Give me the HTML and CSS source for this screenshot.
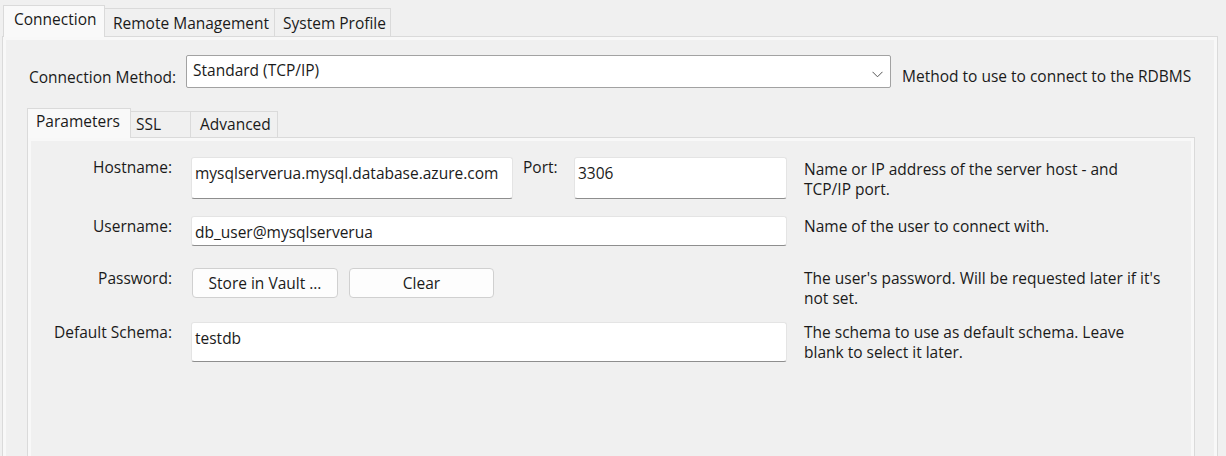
FILE: index.html
```html
<!DOCTYPE html>
<html>
<head>
<meta charset="utf-8">
<link rel="stylesheet" href="styles.css">
</head>
<body>
<div class="window">
  <div class="tabbar outer-tabs">
    <div class="tab active t-conn">Connection</div>
    <div class="tab t-remote">Remote Management</div>
    <div class="tab t-sys">System Profile</div>
  </div>
  <div class="panel outer-panel">
    <div class="method-row">
      <div class="method-label">Connection Method:</div>
      <div class="select">
        <span class="select-text">Standard (TCP/IP)</span>
        <svg class="chevron" width="11" height="7" viewBox="0 0 11 7"><polyline points="0.5,0.8 5.5,5.8 10.5,0.8" fill="none" stroke="#555" stroke-width="1"/></svg>
      </div>
      <div class="hint method-hint">Method to use to connect to the RDBMS</div>
    </div>
    <div class="tabbar inner-tabs">
      <div class="tab active t-params">Parameters</div>
      <div class="tab t-ssl">SSL</div>
      <div class="tab t-adv">Advanced</div>
    </div>
    <div class="panel inner-panel">
      <div class="form-row row-host">
        <div class="label">Hostname:</div>
        <div class="field host-field">
          <div class="input host-input">mysqlserverua.mysql.database.azure.com</div>
          <div class="port-label">Port:</div>
          <div class="input port-input">3306</div>
        </div>
        <div class="hint">Name or IP address of the server host - and<br>TCP/IP port.</div>
      </div>
      <div class="form-row row-user">
        <div class="label">Username:</div>
        <div class="field">
          <div class="input user-input">db_user@mysqlserverua</div>
        </div>
        <div class="hint">Name of the user to connect with.</div>
      </div>
      <div class="form-row row-pass">
        <div class="label">Password:</div>
        <div class="field buttons">
          <div class="button btn-vault">Store in Vault ...</div>
          <div class="button btn-clear">Clear</div>
        </div>
        <div class="hint">The user's password. Will be requested later if it's<br>not set.</div>
      </div>
      <div class="form-row row-schema">
        <div class="label">Default Schema:</div>
        <div class="field">
          <div class="input schema-input">testdb</div>
        </div>
        <div class="hint">The schema to use as default schema. Leave<br>blank to select it later.</div>
      </div>
    </div>
  </div>
</div>
</body>
</html>
```

FILE: styles.css
```css
html, body {
  margin: 0;
  padding: 0;
  height: 456px;
  overflow: hidden;
  background: #f0f0f0;
}
body {
  font-family: "Open Sans", "Noto Sans", sans-serif;
  font-size: 15.5px;
  line-height: 20px;
  color: #1a1a1a;
}
.window {
  height: 456px;
  display: flex;
  flex-direction: column;
}
.tabbar {
  display: flex;
  align-items: flex-end;
}
.outer-tabs {
  height: 36px;
  padding-left: 3px;
}
.tab {
  box-sizing: border-box;
  height: 28px;
  border: 1px solid #dadada;
  border-bottom: none;
  background: #f0f0f0;
  padding: 4px 8px 0 8px;
  white-space: nowrap;
  margin-left: -1px;
}
.tab:first-child { margin-left: 0; }
.tab.active {
  background: #f9f9f9;
  padding-top: 3px;
  position: relative;
  z-index: 2;
  margin-bottom: -1px;
  height: 32px;
}
.t-conn { width: 102px; padding-left: 10px; }
.t-remote { width: 171px; padding-left: 8px; }
.t-sys { width: 117px; padding-left: 8px; }

.panel {
  box-sizing: border-box;
  border: 1px solid #dadada;
  border-bottom: none;
  background: #f0f0f0;
  box-shadow: inset 3px 0 0 #f8f8f8, inset -3px 0 0 #f8f8f8, inset 0 3px 0 #f8f8f8;
}
.outer-panel {
  flex: 1;
  margin: 0 8px 0 2px;
  padding: 18px 22px 0 24px;
  display: flex;
  flex-direction: column;
  min-height: 0;
}
.method-row {
  display: flex;
  align-items: flex-start;
  height: 33px;
}
.method-label {
  width: 159px;
  padding-left: 2px;
  box-sizing: border-box;
  padding-top: 12px;
  white-space: nowrap;
}
.select {
  box-sizing: border-box;
  width: 705px;
  height: 33px;
  background: #fff;
  border: 1px solid #a2a2a2;
  border-radius: 2px;
  display: flex;
  align-items: flex-start;
  justify-content: space-between;
  padding: 4px 7px 0 6px;
}
.chevron {
  margin-top: 11px;
}
.method-hint {
  margin-left: 11px;
  padding-top: 11px;
  white-space: nowrap;
}
.inner-tabs {
  margin-top: 20px;
  height: 29px;
}
.inner-tabs .tab {
  height: 26px;
  padding-top: 2px;
}
.inner-tabs .tab.active {
  height: 30px;
  padding-top: 2px;
}
.t-params { width: 104px; padding-left: 8px; }
.t-ssl { width: 61px; padding-left: 5px; }
.t-adv { width: 88px; padding-left: 9px; }

.inner-panel {
  flex: 1;
  min-height: 0;
  padding-top: 19px;
}
.form-row {
  display: grid;
  grid-template-columns: 144px 596px 1fr;
  column-gap: 19px;
  align-items: start;
}
.form-row .hint { margin-left: -2px; white-space: nowrap; }
.label {
  text-align: right;
  white-space: nowrap;
}
.row-host { height: 39px; margin-bottom: 20px; }
.row-user { height: 30px; margin-bottom: 22px; }
.row-pass { height: 30px; margin-bottom: 24px; }
.row-schema { height: 38px; }
.row-host .hint { padding-top: 2px; }

.field {
  display: flex;
  height: 100%;
}
.input {
  box-sizing: border-box;
  height: 100%;
  background: #fff;
  border: 1px solid #e4e4e4;
  border-bottom: 1px solid #8e8e8e;
  border-radius: 3px;
  padding: 5px 3px 0 3px;
  white-space: nowrap;
  overflow: hidden;
}
.host-input { width: 322px; }
.port-label {
  margin-left: 10px;
  width: 51px;
}
.port-input { flex: 1; }
.user-input, .schema-input { width: 100%; }
.buttons {
  gap: 11px;
  padding-left: 1px;
}
.button {
  box-sizing: border-box;
  height: 30px;
  background: #fdfdfd;
  border: 1px solid #d0d0d0;
  border-radius: 4px;
  text-align: center;
  padding-top: 4px;
  white-space: nowrap;
}
.btn-vault { width: 146px; }
.btn-clear { width: 145px; }
```
